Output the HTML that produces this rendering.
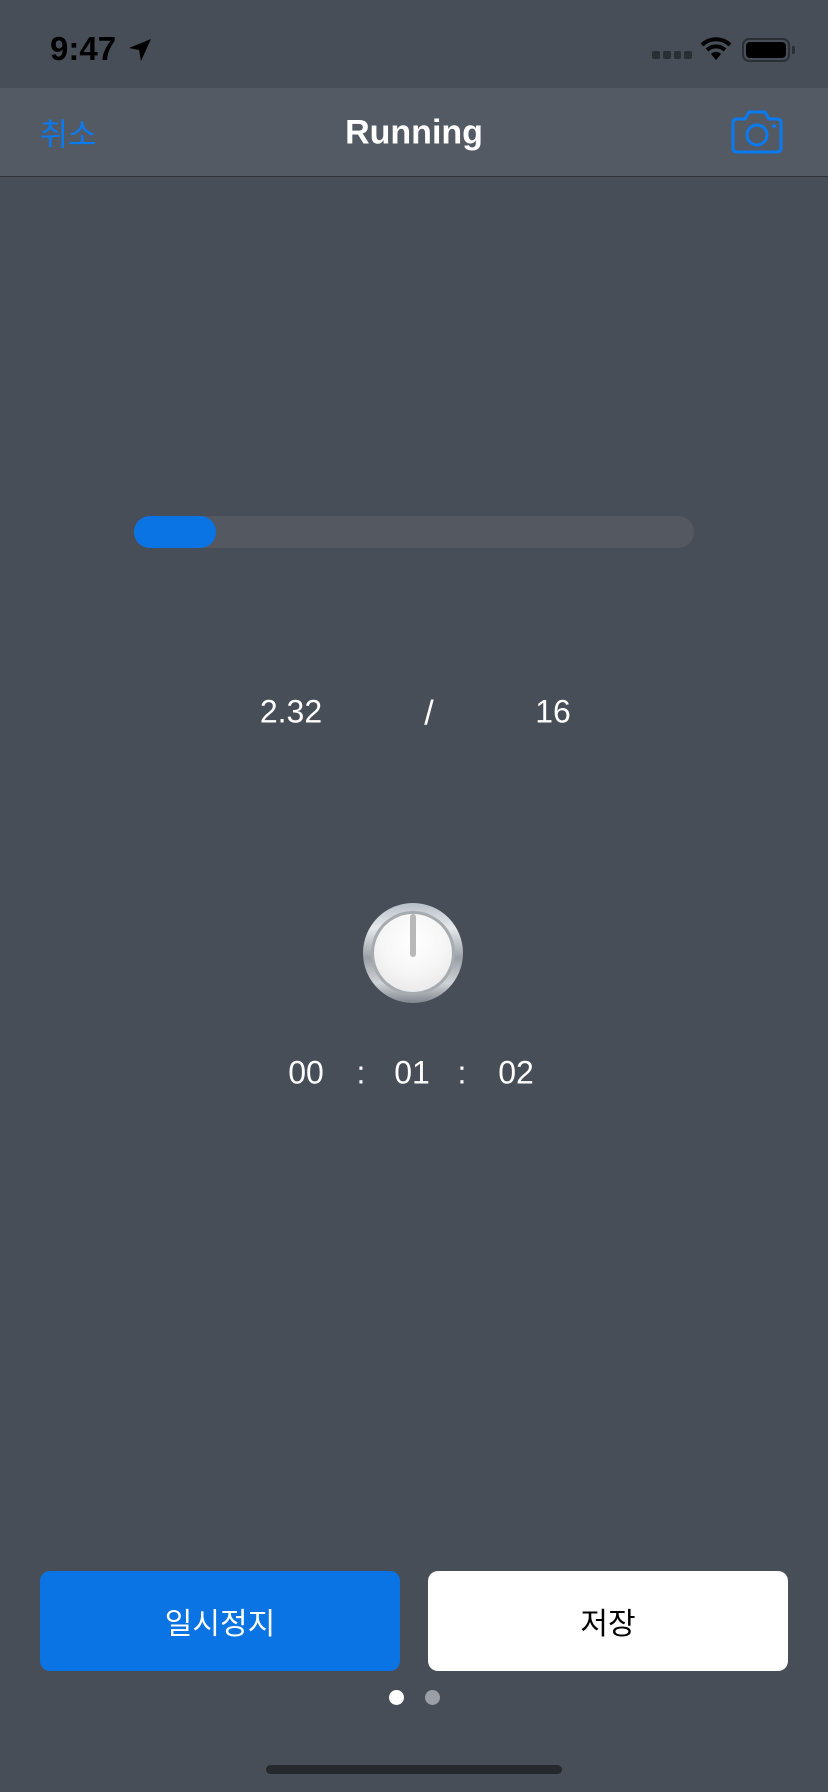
<!DOCTYPE html>
<html><head><meta charset="utf-8"><style>
*{margin:0;padding:0;box-sizing:border-box}
body{width:828px;height:1792px;background:#484e58;position:relative;overflow:hidden;font-family:"Liberation Sans","Noto Sans CJK KR",sans-serif;color:#fff}
.a{position:absolute}
.t{transform:translate(-50%,-50%);white-space:nowrap}
</style></head><body>
<div class="a" style="left:50px;top:30px;font-size:33px;font-weight:bold;color:#000">9:47</div>
<svg class="a" style="left:127px;top:37px" width="26" height="26" viewBox="0 0 26 26"><path d="M24 2 L2 11 L12 13 L14 24 Z" fill="#000"/></svg>
<div class="a" style="left:652px;top:51px;width:40px;height:8px;display:flex;gap:3px"><i style="flex:1;background:#2a2e35;border-radius:2px"></i><i style="flex:1;background:#2a2e35;border-radius:2px"></i><i style="flex:1;background:#2a2e35;border-radius:2px"></i><i style="flex:1;background:#2a2e35;border-radius:2px"></i></div>
<svg class="a" style="left:700px;top:37px" width="32" height="24" viewBox="0 0 32 24"><path d="M2 8 A20 20 0 0 1 30 8" stroke="#000" stroke-width="4" fill="none"/><path d="M7 13 A13 13 0 0 1 25 13" stroke="#000" stroke-width="4" fill="none"/><path d="M11 17 L16 23 L21 17 A7 7 0 0 0 11 17Z" fill="#000"/></svg>
<div class="a" style="left:742px;top:38px;width:48px;height:24px;border:2px solid #2a2e35;border-radius:7px;padding:2px"><div style="width:100%;height:100%;background:#000;border-radius:4px"></div></div>
<div class="a" style="left:792px;top:46px;width:3px;height:8px;background:#2a2e35;border-radius:0 2px 2px 0"></div>
<div class="a" style="left:0;top:88px;width:828px;height:89px;background:#535a63;border-bottom:1px solid #30343a"></div>
<div class="a t" style="left:68px;top:132px;font-size:31px;color:#0a7af0">취소</div>
<div class="a t" style="left:414px;top:133px;font-size:34px;font-weight:bold">Running</div>
<svg class="a" style="left:730px;top:110px" width="54" height="44" viewBox="0 0 54 44"><path d="M3 13 Q3 9 7 9 H15 L19 2 H35 L39 9 H47 Q51 9 51 13 V38 Q51 42 47 42 H7 Q3 42 3 38 Z" stroke="#0a7af0" stroke-width="3" fill="none"/><circle cx="27" cy="25" r="10" stroke="#0a7af0" stroke-width="3" fill="none"/><circle cx="44" cy="16" r="2" fill="#0a7af0"/></svg>
<div class="a" style="left:134px;top:516px;width:560px;height:32px;background:#535861;border-radius:16px"></div>
<div class="a" style="left:134px;top:516px;width:82px;height:32px;background:#0a74e4;border-radius:16px"></div>
<div class="a t" style="left:291px;top:712px;font-size:32px">2.32</div>
<div class="a t" style="left:429px;top:714px;font-size:34px">/</div>
<div class="a t" style="left:553px;top:712px;font-size:32px">16</div>
<div class="a" style="left:363px;top:903px;width:100px;height:100px;border-radius:50%;background:linear-gradient(180deg,#b8c0c8 0%,#e6e9ec 25%,#9aa0a6 55%,#d0d4d8 80%,#80868c 100%)"></div>
<div class="a" style="left:371px;top:911px;width:84px;height:84px;border-radius:50%;background:#a6abb0"></div>
<div class="a" style="left:374px;top:914px;width:78px;height:78px;border-radius:50%;background:radial-gradient(circle at 50% 35%,#fff 0%,#f6f6f6 50%,#e2e2e2 100%)"></div>
<div class="a" style="left:410px;top:914px;width:6px;height:43px;background:#b8b8b8;border-radius:3px"></div>
<div class="a t" style="left:306px;top:1073px;font-size:32px">00</div>
<div class="a t" style="left:361px;top:1073px;font-size:32px">:</div>
<div class="a t" style="left:412px;top:1073px;font-size:32px">01</div>
<div class="a t" style="left:462px;top:1073px;font-size:32px">:</div>
<div class="a t" style="left:516px;top:1073px;font-size:32px">02</div>
<div class="a" style="left:40px;top:1571px;width:360px;height:100px;background:#0a74e4;border-radius:10px;display:flex;align-items:center;justify-content:center;font-size:30px">일시정지</div>
<div class="a" style="left:428px;top:1571px;width:360px;height:100px;background:#fff;border-radius:10px;display:flex;align-items:center;justify-content:center;font-size:30px;color:#000">저장</div>
<div class="a" style="left:389px;top:1690px;width:15px;height:15px;border-radius:50%;background:#fff"></div>
<div class="a" style="left:425px;top:1690px;width:15px;height:15px;border-radius:50%;background:#9a9ea5"></div>
<div class="a" style="left:266px;top:1765px;width:296px;height:9px;border-radius:5px;background:#25282d"></div>
</body></html>
